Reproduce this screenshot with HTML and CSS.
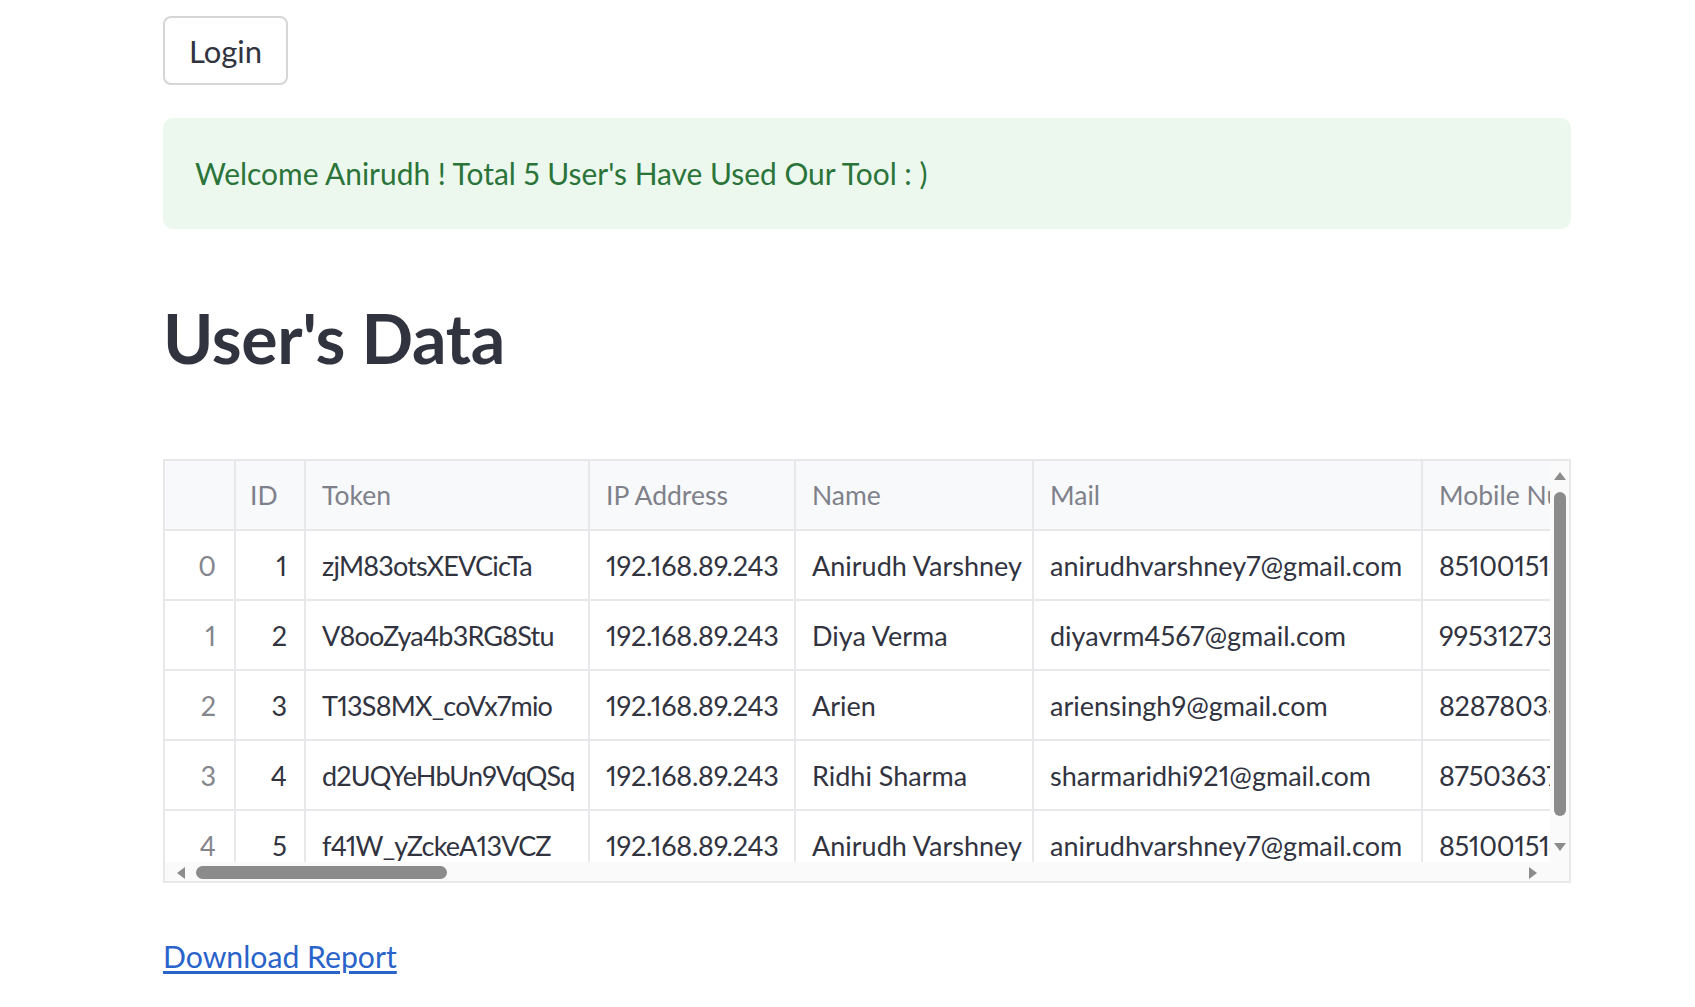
FILE: index.html
```html
<!DOCTYPE html>
<html lang="en">
<head>
<meta charset="utf-8">
<title>User's Data</title>
<link rel="stylesheet" href="styles.css">
</head>
<body>
<main class="page">
  <button class="btn" type="button">Login</button>
  <div class="alert">Welcome Anirudh ! Total 5 User's Have Used Our Tool : )</div>
  <h2 class="title">User's Data</h2>

  <div class="grid">
    <div class="grid-body">
      <div class="row head">
        <div class="cell idx"></div>
        <div class="cell num">ID</div>
        <div class="cell">Token</div>
        <div class="cell">IP Address</div>
        <div class="cell">Name</div>
        <div class="cell">Mail</div>
        <div class="cell">Mobile Number</div>
      </div>
      <div class="row">
        <div class="cell idx">0</div>
        <div class="cell num">1</div>
        <div class="cell token">zjM83otsXEVCicTa</div>
        <div class="cell digits">192.168.89.243</div>
        <div class="cell">Anirudh Varshney</div>
        <div class="cell">anirudhvarshney7@gmail.com</div>
        <div class="cell digits">8510015146</div>
      </div>
      <div class="row">
        <div class="cell idx">1</div>
        <div class="cell num">2</div>
        <div class="cell token">V8ooZya4b3RG8Stu</div>
        <div class="cell digits">192.168.89.243</div>
        <div class="cell">Diya Verma</div>
        <div class="cell">diyavrm4567@gmail.com</div>
        <div class="cell digits">9953127384</div>
      </div>
      <div class="row">
        <div class="cell idx">2</div>
        <div class="cell num">3</div>
        <div class="cell token">T13S8MX_coVx7mio</div>
        <div class="cell digits">192.168.89.243</div>
        <div class="cell">Arien</div>
        <div class="cell">ariensingh9@gmail.com</div>
        <div class="cell digits">8287803352</div>
      </div>
      <div class="row">
        <div class="cell idx">3</div>
        <div class="cell num">4</div>
        <div class="cell token">d2UQYeHbUn9VqQSq</div>
        <div class="cell digits">192.168.89.243</div>
        <div class="cell">Ridhi Sharma</div>
        <div class="cell">sharmaridhi921@gmail.com</div>
        <div class="cell digits">8750363712</div>
      </div>
      <div class="row">
        <div class="cell idx">4</div>
        <div class="cell num">5</div>
        <div class="cell token">f41W_yZckeA13VCZ</div>
        <div class="cell digits">192.168.89.243</div>
        <div class="cell">Anirudh Varshney</div>
        <div class="cell">anirudhvarshney7@gmail.com</div>
        <div class="cell digits">8510015146</div>
      </div>
    </div>

    <div class="vscroll">
      <svg class="arrow-up" width="14" height="10" viewBox="0 0 14 10"><path d="M7 1 L13 9 L1 9 Z" fill="#8c8c8c"/></svg>
      <div class="vthumb"></div>
      <svg class="arrow-down" width="14" height="10" viewBox="0 0 14 10"><path d="M1 1 L13 1 L7 9 Z" fill="#8c8c8c"/></svg>
    </div>
    <div class="hscroll">
      <svg class="arrow-left" width="11" height="14" viewBox="0 0 11 14"><path d="M10 1 L10 13 L2 7 Z" fill="#8c8c8c"/></svg>
      <div class="hthumb"></div>
      <svg class="arrow-right" width="11" height="14" viewBox="0 0 11 14"><path d="M1 1 L9 7 L1 13 Z" fill="#8c8c8c"/></svg>
    </div>
  </div>

  <a class="link" href="#">Download Report</a>
</main>
</body>
</html>
```

FILE: styles.css
```css
html, body {
  margin: 0;
  padding: 0;
  background: #ffffff;
}

body {
  font-family: "Lato", "Liberation Sans", sans-serif;
  color: #31333f;
  font-variant-numeric: proportional-nums;
}

.page {
  width: 1408px;
  margin-left: 163px;
  padding-top: 16px;
  display: flex;
  flex-direction: column;
  align-items: flex-start;
}

.btn {
  height: 69px;
  width: 125px;
  padding: 0;
  font-family: inherit;
  font-size: 31px;
  color: #31333f;
  background: #ffffff;
  border: 2px solid #d6d6d9;
  border-radius: 8px;
  display: flex;
  align-items: center;
  justify-content: center;
}

.alert {
  margin-top: 33px;
  box-sizing: border-box;
  width: 100%;
  height: 111px;
  padding: 30px 32px;
  line-height: 51px;
  font-size: 29.9px;
  color: #2a7439;
  background: #ecf8ee;
  border-radius: 10px;
}

.title {
  margin: 68px 0 0 0;
  font-size: 68px;
  line-height: 81px;
  font-weight: 700;
  letter-spacing: -0.3px;
  color: #31333f;
}

.grid {
  position: relative;
  margin-top: 81px;
  box-sizing: border-box;
  width: 100%;
  height: 424px;
  border: 2px solid #e8e8eb;
  overflow: hidden;
  font-size: 27px;
  letter-spacing: 0;
}

.grid-body {
  width: 1600px;
}

.row {
  display: grid;
  grid-template-columns: 71px 70px 284px 206px 238px 389px 250px;
  height: 70px;
}

.cell {
  box-sizing: border-box;
  border-right: 2px solid #e8e8eb;
  border-bottom: 2px solid #e8e8eb;
  padding: 0 16px;
  display: flex;
  align-items: center;
  white-space: nowrap;
  overflow: hidden;
  color: #31333f;
}

.cell.digits {
  letter-spacing: -0.25px;
}

.cell.token {
  letter-spacing: -0.8px;
}

.head .cell {
  background: #f8f9fb;
  color: #7f818a;
  font-size: 26.5px;
}

.cell.idx {
  justify-content: flex-end;
  padding-right: 18px;
  color: #84858d;
}

.cell.num {
  justify-content: flex-end;
  padding-right: 17px;
}

.head .cell.num {
  justify-content: flex-start;
  padding-left: 14px;
}

.vscroll {
  position: absolute;
  top: 0;
  right: 0;
  width: 19px;
  height: 401px;
  background: #fafafa;
}

.arrow-up {
  position: absolute;
  top: 10px;
  left: 3px;
}

.vthumb {
  position: absolute;
  top: 31px;
  left: 4px;
  width: 12px;
  height: 324px;
  border-radius: 6px;
  background: #8b8b8b;
}

.arrow-down {
  position: absolute;
  top: 381px;
  left: 3px;
}

.hscroll {
  position: absolute;
  left: 0;
  right: 0;
  bottom: 0;
  height: 19px;
  background: #fafafa;
}

.arrow-left {
  position: absolute;
  left: 10px;
  top: 4px;
}

.hthumb {
  position: absolute;
  left: 31px;
  top: 4px;
  width: 251px;
  height: 13px;
  border-radius: 7px;
  background: #8b8b8b;
}

.arrow-right {
  position: absolute;
  left: 1363px;
  top: 4px;
}

.link {
  margin-top: 55px;
  font-size: 30.2px;
  line-height: 36px;
  color: #2a63c9;
  text-decoration: underline;
  text-underline-offset: 3px;
}
```
